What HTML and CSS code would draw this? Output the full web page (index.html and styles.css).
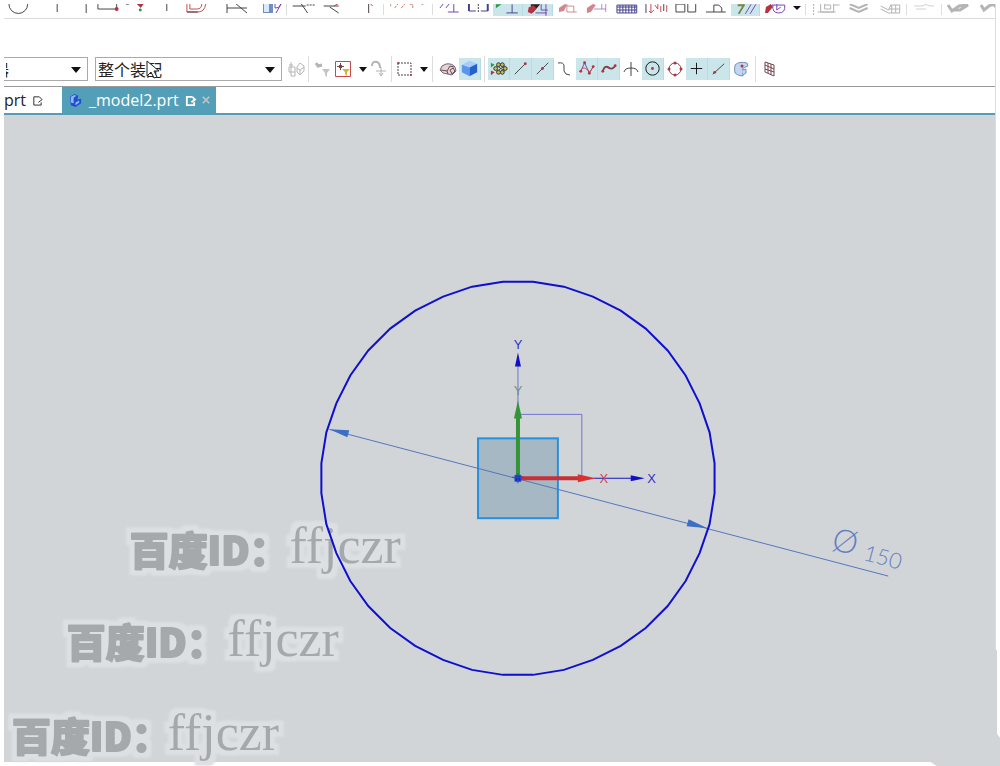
FILE: index.html
```
<!DOCTYPE html>
<html lang="zh-CN">
<head>
    <meta charset="UTF-8">
    <meta name="viewport" content="width=device-width, initial-scale=1.0">
    <title>_model2.prt</title>
    <link rel="stylesheet" href="styles.css">
</head>
<body>
    <div class="window">
        <!-- Sketch tools -->
        <div class="sketch-bar">
            <div class="group group-curves">
                <button aria-label="Circle"><svg viewBox="0 0 30 14"><path d="M5 1a9.500 9.500 0 0 0 19 0" transform="translate(0 -1)"/></svg></button>
                <button aria-label="Line"><svg viewBox="0 0 30 14"><path d="M23.500 0v8"/></svg></button>
                <button aria-label="Arc"><svg viewBox="0 0 30 14"><path d="M23.500 0v9"/></svg></button>
                <button aria-label="Rectangle"><svg viewBox="0 0 30 14"><path d="M5 0v5h19V0"/><circle class="red-fill" cx="24" cy="5" r="2"/></svg></button>
                <button aria-label="Point"><svg viewBox="0 0 30 14"><path class="red-fill" d="M15 0h7l-3 4z"/><circle cx="18.500" cy="6" r="1.500" class="green-fill"/><path class="gray" d="M4 0h3"/></svg></button>
                <button aria-label="Trim"><svg viewBox="0 0 30 14"><path d="M15 0v7"/></svg></button>
                <button aria-label="Offset"><svg viewBox="0 0 30 14"><path class="red" d="M6 0v8h11q7 0 8-8M9 0v5h7q5 0 5-5"/><path d="M6 8h11"/></svg></button>
            </div>
            <div class="group group-pair">
                <button aria-label="Quick trim"><svg viewBox="0 0 30 14"><path d="M5 0v9M5 4h20M13-1l12 10"/></svg></button>
                <button aria-label="Project curve"><svg viewBox="0 0 30 14"><path class="blue-fill" d="M9 0h10v9h-10z"/><path class="light-fill" d="M10 0h5v8h-5z"/><path class="purple" d="M21 0v4q4 1 6-4M27 0l-5 9"/></svg></button>
            </div>
            <span class="separator"></span>
            <div class="group group-three">
                <button aria-label="Trim corner"><svg viewBox="0 0 30 14"><path d="M4 2h13M12-1l7 10"/><path class="dash" d="M18 1h8"/></svg></button>
                <button aria-label="Extend"><svg viewBox="0 0 30 14"><path d="M4 2h15M10 3l9 6"/><path class="red" d="M14 2l6-3"/></svg></button>
                <button aria-label="Corner"><svg viewBox="0 0 30 14"><path d="M17 0v9"/><path class="red" d="M19 0l2 2"/></svg></button>
            </div>
            <span class="separator"></span>
            <div class="group group-wide">
                <button aria-label="Pattern curve"><svg viewBox="0 0 48 14"><path class="orange" d="M6 0v2M10 4l4-5M17 4l4-5M26 0h3v4M38 0h2"/></svg></button>
            </div>
            <span class="separator"></span>
            <div class="group group-constraints">
                <button aria-label="Constraint"><svg viewBox="0 0 30 14"><path class="purple" d="M6 4l4-5M12 4l4-5M20 0v8M14 8h11"/></svg></button>
                <button aria-label="Dimension"><svg viewBox="0 0 30 14"><path class="navy bold" d="M5 0v7M24 0v7"/><path class="navy" d="M5 7h7M17 7h7"/><path class="dash" d="M14.500 0v9"/></svg></button>
                <button class="active" aria-label="Perpendicular"><svg viewBox="0 0 30 14"><path class="green-fill" d="M3 0l6 0-6 4z"/><path class="navy" d="M20 0v9M14 9h12"/></svg></button>
                <button class="active" aria-label="Show dimensions"><svg viewBox="0 0 30 14"><path class="ink-fill" d="M8 0h10l-8 9z"/><path class="red-fill" d="M6 3l5-2 3 3-5 6-4-2z"/><path class="purple" d="M13 9h12M24 0v12M19 0v6h7"/></svg></button>
                <button aria-label="Auto constrain"><svg viewBox="0 0 30 14"><path class="red-fill faded" d="M6 4l6-4 2 1-3 6-5 1z"/><path class="rose" d="M14 0v8h10M14 2h7v6"/></svg></button>
                <button aria-label="Auto dimension"><svg viewBox="0 0 30 14"><path class="red-fill faded" d="M5 4l6-4 3 1-5 7-4 1z"/><path class="purple faded" d="M12 5h12M24 0v8M20 0v5"/></svg></button>
                <button aria-label="Keyboard"><svg viewBox="0 0 30 14"><path class="navy" d="M5 1h20v8H5zM5 3h20M5 6h20M8 1v8M11 1v8M14 1v8M17 1v8M20 1v8M23 1v8"/></svg></button>
                <button aria-label="Convert reference"><svg viewBox="0 0 30 14"><path d="M4 0v9M22 0v7"/><path class="red" d="M9 0v9l-2-2M9 9l3-3M16 0v5l-3-4M19 2v6M25 1v7"/></svg></button>
                <button aria-label="Alternate solution"><svg viewBox="0 0 30 14"><path d="M5 0v8h9V0zM17 0v8h8V0"/></svg></button>
                <button aria-label="Inferred constraints"><svg viewBox="0 0 30 14"><path d="M5 8h20M13 8V1h5l3 3v4"/></svg></button>
                <button class="active" aria-label="Parallel"><svg viewBox="0 0 30 14"><path class="olive" d="M7 1h7M14 0L8 10"/><path class="purple" d="M21 0l-6 10M26 0l-6 10"/></svg></button>
                <button aria-label="Symmetric"><svg viewBox="0 0 30 14"><path class="red-fill" d="M5 9l1-6 5-3 2 3-5 6z"/><path class="purple" d="M12 1h13M13 1q-1 8 6 8t6-8M17 0v6l4-3"/></svg></button>
            </div>
            <button class="caret" aria-label="More constraints"><svg viewBox="0 0 14 14"><path d="M3 2h8l-4 4z"/></svg></button>
            <span class="separator"></span>
            <div class="group group-view muted">
                <button aria-label="Fit"><svg viewBox="0 0 30 14"><path class="dash" d="M2 0v12"/><path d="M9 0v8h13V0M13 0v5h6V1h-6M6 8h18M22 1h6"/></svg></button>
                <button aria-label="Layer"><svg viewBox="0 0 30 14"><path class="bold" d="M7 0l9 4 9-4M7 4l9 4 9-4"/></svg></button>
                <button aria-label="Sheet"><svg viewBox="0 0 30 14"><path d="M6 2l8 4 2-5h9v8H14L6 5M17 1v8M21 1v8M14 5h11"/></svg></button>
            </div>
            <span class="separator"></span>
            <div class="group group-one muted faded">
                <button aria-label="Attach"><svg viewBox="0 0 30 14"><path d="M5 2h8q4-3 8 0h4M7 5h10"/></svg></button>
            </div>
            <span class="separator"></span>
            <div class="group group-pair muted">
                <button aria-label="Undo"><svg viewBox="0 0 30 14"><path class="thick" d="M4 1l4 6 7-5 9-1-8 5H7"/></svg></button>
                <button aria-label="Redo"><svg viewBox="0 0 30 14"><path class="thick" d="M5 1l3 5 5-4q6-4 8 4"/></svg></button>
            </div>
        </div>

        <!-- Selection filters and snap points -->
        <div class="selection-bar">
            <div class="dropdown dropdown-filter">
                <select aria-label="过滤器"><option>器</option></select>
                <svg class="arrow" viewBox="0 0 10 6"><path d="M0 0h10L5 6z"/></svg>
            </div>
            <div class="dropdown dropdown-scope">
                <select aria-label="选择范围"><option>整个装配</option></select>
                <svg class="arrow" viewBox="0 0 10 6"><path d="M0 0h10L5 6z"/></svg>
                <svg class="pointer" viewBox="0 0 14 20"><path d="M1 1v15l4-4 3 6 3-1-3-6h5z"/></svg>
            </div>
            <button class="muted space" aria-label="Assembly"><svg viewBox="0 0 22 22"><path d="M4 7h4M6 4v14h4V9H4v5h6M12 9l3-4 4 3v5l-4 4-3-3zM12 10l3 2 4-3M15 12v5"/></svg></button>
            <span class="separator"></span>
            <button class="muted" aria-label="Filter off"><svg viewBox="0 0 22 22"><path class="thick" d="M4 5l2 3 4-1"/><path class="gray-fill" d="M10 11h8l-3 4v4l-2-2v-2z"/></svg></button>
            <button class="filter" aria-label="Filter"><svg viewBox="0 0 22 22"><path class="red" d="M3.500 3.500h15v15h-15z"/><path class="brown" d="M8.500 5v7M5 8.500h7M7 7l3 3M10 7l-3 3"/><path class="yellow-fill" d="M10 11h8l-3 3v4l-2-2v-2z"/></svg></button>
            <button class="caret" aria-label="Filter options"><svg viewBox="0 0 14 22"><path d="M3 9h8l-4 5z"/></svg></button>
            <button class="muted" aria-label="Deselect"><svg viewBox="0 0 22 22"><path class="bold" d="M4 8q0-5 5-4 3 1 3 6"/><path d="M13 9v9M8 13h10M11 15l2 3 2-3"/></svg></button>
            <span class="separator"></span>
            <button class="marquee" aria-label="Rectangle select"><svg viewBox="0 0 22 22"><path class="dash" d="M5 5h13v12H5z"/><circle class="red-fill" cx="5" cy="5" r="1"/><circle class="red-fill" cx="18" cy="17" r="1"/></svg></button>
            <button class="caret" aria-label="Selection shape"><svg viewBox="0 0 14 22"><path d="M3 9h8l-4 5z"/></svg></button>
            <span class="separator"></span>
            <button class="solid" aria-label="Wireframe"><svg viewBox="0 0 22 22"><path class="shell" d="M3 12q1-5 6-6 6-1 9 3l1 4-4 4-9-2z"/><path class="brown" d="M4 12l6 1 3-5 4 1M10 13l1 3M13 12l3-2 2 3-3 3z"/></svg></button>
            <button class="active" aria-label="Shaded"><svg viewBox="0 0 22 22"><path class="cube-top" d="M3 7l8-4 8 3-8 4z"/><path class="cube-left" d="M3 7l8 3v9l-8-4z"/><path class="cube-right" d="M11 10l8-4v9l-8 4z"/></svg></button>
            <span class="separator wide"></span>
            <button class="active" aria-label="Snap points"><svg viewBox="0 0 22 22"><path class="green-fill" d="M3 5l4 2-4 3z"/><path class="red-fill" d="M3 13l4 2-4 3z"/><path d="M9 8l9 6M9 14l9-6"/><g class="nodes"><circle cx="8" cy="11" r="2"/><circle cx="11" cy="7" r="2"/><circle cx="15" cy="7" r="2"/><circle cx="18" cy="11" r="2"/><circle cx="15" cy="15" r="2"/><circle cx="11" cy="15" r="2"/></g></svg></button>
            <button class="active" aria-label="End point"><svg viewBox="0 0 22 22"><path d="M5 17L16 6"/><circle class="red-fill" cx="16" cy="6" r="1.500"/></svg></button>
            <button class="active" aria-label="Mid point"><svg viewBox="0 0 22 22"><path d="M5 17L17 5"/><circle class="red-fill" cx="11" cy="11" r="1.500"/></svg></button>
            <button aria-label="Control point"><svg viewBox="0 0 22 22"><path d="M4 5q6-1 6 3t0 5q1 4 6 4"/></svg></button>
            <button class="active" aria-label="Pole"><svg viewBox="0 0 22 22"><path class="purple" d="M5 14L9 5l5 11 4-7"/><path class="red" d="M4 14q3-5 6-3t4 3 4-5"/><g class="red-fill"><circle cx="5" cy="14" r="1.500"/><circle cx="9" cy="5" r="1.500"/><circle cx="14" cy="16" r="1.500"/><circle cx="18" cy="9" r="1.500"/></g></svg></button>
            <button class="active" aria-label="Spline point"><svg viewBox="0 0 22 22"><path class="brown bold" d="M5 14q2-7 6-4t7-2"/><g class="red-fill"><circle cx="5" cy="14" r="1.500"/><circle cx="11" cy="10" r="1"/><circle cx="18" cy="8" r="1.500"/></g></svg></button>
            <button aria-label="Intersection"><svg viewBox="0 0 22 22"><path d="M11 4v14M4 14q1-4 7-4t7 4"/></svg></button>
            <button class="active" aria-label="Arc center"><svg viewBox="0 0 22 22"><circle class="dark" cx="11" cy="11" r="7"/><circle class="red-fill" cx="11" cy="11" r="1.500"/></svg></button>
            <button aria-label="Quadrant"><svg viewBox="0 0 22 22"><circle class="brown" cx="11" cy="11" r="6"/><g class="red-fill"><circle cx="11" cy="5" r="1.500"/><circle cx="17" cy="11" r="1.500"/><circle cx="11" cy="17" r="1.500"/><circle cx="5" cy="11" r="1.500"/></g></svg></button>
            <button class="active" aria-label="Existing point"><svg viewBox="0 0 22 22"><path class="dark" d="M11 5v12M5 11h12"/></svg></button>
            <button class="active" aria-label="Point on curve"><svg viewBox="0 0 22 22"><path d="M5 17L17 6"/><circle class="red-fill" cx="7" cy="15" r="1.500"/></svg></button>
            <button aria-label="Point on face"><svg viewBox="0 0 22 22"><path class="face" d="M5 7q4-4 12-2l1 3-5 2q-1 4 0 8-5 0-8-3-1-4 0-8z"/><path class="face" d="M12 12l4-1v4l-3 2"/><circle class="red-fill" cx="12" cy="8" r="1.500"/></svg></button>
            <span class="separator wide"></span>
            <button aria-label="Grid snap"><svg viewBox="0 0 22 22"><path class="brown" d="M6 4l9 3v11l-9-4zM9 5v10M12 6v11M6 7l9 4M6 11l9 3"/></svg></button>
        </div>

        <!-- Open parts -->
        <nav class="tabs">
            <a class="tab tab-first" href="#model1">prt
                <svg class="modified" viewBox="0 0 12 12"><path d="M8 2H2v9h8V8M8 2l3 3-4 3"/></svg>
            </a>
            <a class="tab current" href="#model2">
                <svg class="part" viewBox="0 0 16 16"><path class="part-body" d="M2 4l5-3 4 2-1 4 4-1v5l-6 4-5-2z"/><path class="part-shine" d="M3 4l4-2 2 1-3 2v6l-3-1zM8 10l4-2v2l-4 3z"/></svg>
                <span>_model2.prt</span>
                <svg class="modified" viewBox="0 0 12 12"><path d="M8 2H2v9h8V8M8 2l3 3-4 3"/></svg>
                <svg class="close" viewBox="0 0 10 10"><path d="M1 1l8 8M9 1L1 9"/></svg>
            </a>
        </nav>

        <main class="viewport">
            <svg class="drawing" viewBox="4 114 992 648">
                <defs>
                    <filter id="halo" x="-10%" y="-30%" width="120%" height="160%">
                        <feMorphology in="SourceAlpha" operator="dilate" radius="5" result="spread"/>
                        <feGaussianBlur in="spread" stdDeviation="1" result="soft"/>
                        <feFlood flood-color="#dce0e2"/>
                        <feComposite in2="soft" operator="in" result="glow"/>
                        <feMerge><feMergeNode in="glow"/><feMergeNode in="SourceGraphic"/></feMerge>
                    </filter>
                </defs>
                <path class="corner" d="M928 760l12 8h64v-26l-6-8V650h-4v110z"/>

                <g class="watermark">
                    <g><text class="cjk" x="129" y="565">百度ID：</text><text class="latin" x="289" y="563">ffjczr</text></g>
                    <g><text class="cjk" x="66" y="657">百度ID：</text><text class="latin" x="227" y="656">ffjczr</text></g>
                    <g><text class="cjk" x="11" y="751">百度ID：</text><text class="latin" x="167" y="750">ffjczr</text></g>
                </g>

                <g transform="translate(518 478)">
                    <rect class="plane" x="-40" y="-40" width="80" height="80"/>
                    <path class="csys" d="M0-64h64v64"/>
                    <path class="dim-line" d="M-189-49L371 98"/>
                    <path class="dim-arrow" d="M-189-49l20 1-2 7zM190 50l-19-9-2 7z"/>
                    <!-- 40-sided circle -->
                    <polygon class="circle" points="15,-197 46,-192 75,-182 103,-168 128,-150 150,-128 168,-103 182,-75 192,-46 197,-15 197,15 192,46 182,75 168,103 150,128 128,150 103,168 75,182 46,192 15,197 -15,197 -46,192 -75,182 -103,168 -128,150 -150,128 -168,103 -182,75 -192,46 -197,15 -197,-15 -192,-46 -182,-75 -168,-103 -150,-128 -128,-150 -103,-168 -75,-182 -46,-192 -15,-197"/>
                    <path class="axis-thin" d="M0-64v-50"/>
                    <path class="axis-blue" d="M76 0h38"/>
                    <path class="blue-tip" d="M0-126l3 14h-6zM127 0l-14-3v6z"/>
                    <path class="axis-y" d="M0 0v-62"/>
                    <path class="tip-y" d="M0-78l4 18h-8z"/>
                    <path class="axis-x" d="M0 0h62"/>
                    <path class="tip-x" d="M78 0L60-4v8z"/>
                    <path class="origin" d="M-3-3h6v6h-6zM-6-1h12M0-5v10"/>
                    <g class="axis-label">
                        <text x="0" y="-130">Y</text>
                        <text class="label-y" x="0" y="-83">Y</text>
                        <text class="label-x" x="86" y="5">X</text>
                        <text x="134" y="5">X</text>
                    </g>
                </g>
                <g class="dim-text" transform="translate(831 549) rotate(15)">
                    <text class="diameter">Ø</text>
                    <text class="value" x="34" y="2">150</text>
                </g>
            </svg>
        </main>
    </div>
</body>
</html>
```
FILE: styles.css
```
* {
    box-sizing: border-box;
}

body {
    margin: 0;
    padding: 4px;
    min-height: 100vh;
    overflow: hidden;
    background-color: #fff;
    font-family: "Open Sans", "Noto Sans CJK SC", sans-serif;
    color: #222;
}

.window {
    border-right: 1px solid #ddd;
}

svg {
    display: block;
    overflow: visible;
}

/* Buttons */
button {
    display: block;
    flex: none;
    width: 22px;
    height: 22px;
    margin: 0;
    padding: 0;
    border: none;
    background: none;
}

button svg {
    width: 100%;
    fill: none;
    stroke: #444;
    stroke-width: 1;
}

button.active {
    background-color: #cbe6eb;
    border-right: 1px solid #b9dbe2;
}

button.caret {
    width: 14px;
}

.caret path {
    fill: #111;
    stroke: none;
}

.separator {
    flex: none;
    width: 1px;
    margin: 0 1px;
    background-color: #ddd;
}

.muted svg {
    stroke: #b4b4b4;
}

.faded {
    opacity: 0.6;
}

/* Icon colours */
button .dark { stroke: #111; }
button .red { stroke: #c54a50; }
button .rose { stroke: #c79090; }
button .brown { stroke: #76454c; }
button .orange { stroke: #c58068; stroke-dasharray: 3 1; }
button .olive { stroke: #788745; stroke-width: 2; }
button .purple { stroke: #7a43b0; }
button .navy { stroke: #45418e; }
button .bold { stroke-width: 2; }
button .thick { stroke-width: 3; }
button .dash { stroke-dasharray: 2 1; }
button .red-fill { fill: #b83340; stroke: none; }
button .green-fill { fill: #279b4b; stroke: none; }
button .yellow-fill { fill: #d7b52d; stroke: none; }
button .gray-fill { fill: #c4c4c4; stroke: none; }
button .blue-fill { fill: #6c8dc5; stroke: none; }
button .light-fill { fill: #dce9f7; stroke: none; }
button .ink-fill { fill: #222; stroke: none; }
button .shell { fill: #ddd5da; stroke: #76656d; }
button .face { fill: #c1d6f2; stroke: #7692bd; }
button .cube-top { fill: #a6cdfb; stroke: none; }
button .cube-left { fill: #5b96ec; stroke: none; }
button .cube-right { fill: #2463cd; stroke: none; }
button .nodes { fill: #c9bd45; stroke: #333; }

/* Sketch toolbar */
.sketch-bar {
    display: flex;
    height: 15px;
    overflow: hidden;
    border-bottom: 1px solid #ddd;
}

.sketch-bar button {
    width: auto;
    height: 12px;
    overflow: hidden;
}

.sketch-bar button svg {
    height: 14px;
}

.sketch-bar button.caret {
    width: 14px;
}

.sketch-bar .separator {
    height: 11px;
}

.group {
    display: grid;
    flex: none;
    grid-auto-flow: column;
    grid-auto-columns: 1fr;
}

.group-curves {
    width: 207px;
    margin-right: 10px;
}

.group-pair {
    width: 64px;
}

.group-three {
    width: 94px;
}

.group-wide {
    width: 46px;
}

.group-one {
    width: 32px;
}

.group-view {
    width: 94px;
    margin-left: 4px;
}

.group-constraints {
    width: 356px;
}

/* Selection toolbar */
.selection-bar {
    display: flex;
    align-items: center;
    height: 34px;
    margin-top: 34px;
    padding-bottom: 2px;
    border-bottom: 1px solid #999;
}

.selection-bar .separator {
    height: 26px;
}

.selection-bar .wide {
    margin: 0 3px;
}

.dropdown {
    position: relative;
    flex: none;
    height: 24px;
    border: 1px solid #aaa;
}

.dropdown-filter {
    width: 84px;
    margin-right: 7px;
    border-left: none;
    overflow: hidden;
}

.dropdown-filter select {
    text-indent: -13px;
}

.dropdown-scope {
    width: 187px;
}

.dropdown select {
    width: 100%;
    height: 22px;
    padding: 0 2px;
    border: none;
    appearance: none;
    background: none;
    font-family: "Noto Sans CJK SC", sans-serif;
    font-size: 16px;
    line-height: 22px;
    color: #222;
}

.arrow {
    position: absolute;
    top: 9px;
    right: 6px;
    width: 10px;
    fill: #111;
}

.pointer {
    position: absolute;
    top: 2px;
    left: 50px;
    width: 14px;
    fill: #fff;
    stroke: #222;
}

.space {
    margin-left: 3px;
}

.selection-bar .caret,
.selection-bar .separator + .muted {
    margin-left: 2px;
}

.solid {
    margin-left: 3px;
}

button.filter {
    margin-left: -2px;
}

.filter + .caret + .muted {
    margin-left: -2px;
}

/* Part tabs */
.tabs {
    display: flex;
    height: 28px;
    border-bottom: 2px solid #559db5;
}

.tab {
    display: flex;
    align-items: center;
    gap: 6px;
    font-size: 16px;
    line-height: 26px;
    color: #222;
    text-decoration: none;
}

.tab-first {
    width: 58px;
}

.current {
    padding: 0 6px;
    background-color: #539fb7;
    color: #fff;
}

.part {
    width: 15px;
}

.part-body {
    fill: #1f4fd0;
}

.part-shine {
    fill: #8fb8f8;
}

.modified {
    width: 11px;
    fill: none;
    stroke: currentColor;
    stroke-width: 1;
}

.current .modified {
    stroke-width: 2;
}

.close {
    width: 8px;
    stroke: #c9c4c4;
    stroke-width: 2;
}

/* Graphics area */
.viewport {
    background-color: #d2d5d7;
    border-left: 1px solid #d4d4d4;
}

.drawing {
    width: 100%;
    height: auto;
    fill: none;
}

.corner {
    fill: #d2d5d7;
}

.plane {
    fill: #a6b8c3;
    stroke: #2790dc;
    stroke-width: 2;
}

.circle {
    stroke: #0f0fd0;
    stroke-width: 2;
}

.csys,
.axis-thin {
    stroke: #7272d2;
}

.dim-line {
    stroke: #5376bd;
}

.dim-arrow {
    fill: #3c6fc4;
}

.axis-blue {
    stroke: #1515c5;
    stroke-width: 1;
}

.blue-tip {
    fill: #1010c8;
}

.axis-y {
    stroke: #359338;
    stroke-width: 4;
}

.tip-y {
    fill: #359338;
}

.axis-x {
    stroke: #c93035;
    stroke-width: 4;
}

.tip-x {
    fill: #db3032;
}

.origin {
    fill: #1725cd;
    stroke: #2454b8;
}

.axis-label {
    font-family: "Liberation Sans", sans-serif;
    font-size: 13px;
    text-anchor: middle;
    fill: #3030c8;
}

.label-y {
    fill: #6f9289;
}

.label-x {
    fill: #d63e4b;
}

.dim-text {
    font-family: Lato, sans-serif;
    font-weight: 300;
    fill: #6280c5;
}

.diameter {
    font-size: 32px;
}

.value {
    font-size: 22px;
}

/* Watermark */
.watermark {
    fill: #a5a9ab;
}

.watermark g {
    filter: url(#halo);
}

.cjk {
    font-family: "Noto Sans CJK SC", sans-serif;
    font-size: 39px;
    font-weight: 900;
    stroke: #a5a9ab;
    stroke-width: 2;
    stroke-linejoin: round;
}

.latin {
    font-family: "Liberation Serif", serif;
    font-size: 52px;
}
```
